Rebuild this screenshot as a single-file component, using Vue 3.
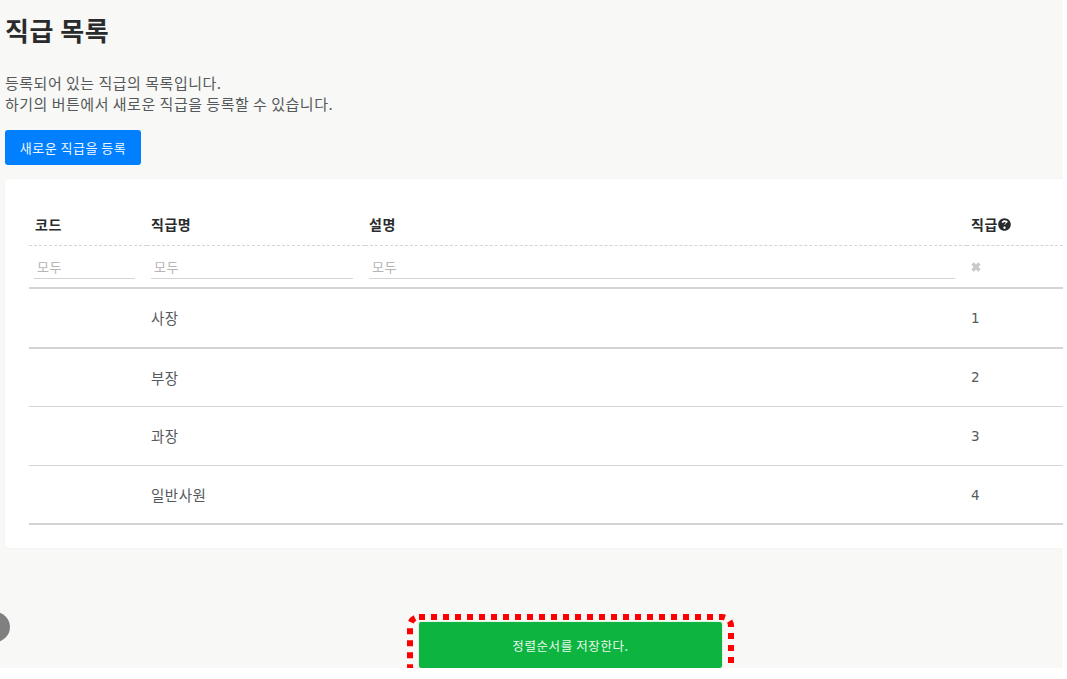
<script setup>
const rows = [
  { code: '', name: '사장', desc: '', rank: 1 },
  { code: '', name: '부장', desc: '', rank: 2 },
  { code: '', name: '과장', desc: '', rank: 3 },
  { code: '', name: '일반사원', desc: '', rank: 4 }
];
</script>

<template>
  <div class="page">
    <h1 class="title">직급 목록</h1>
    <p class="intro">등록되어 있는 직급의 목록입니다.<br />하기의 버튼에서 새로운 직급을 등록할 수 있습니다.</p>
    <button class="add-btn">새로운 직급을 등록</button>

    <div class="card">
      <table class="grid">
        <colgroup>
          <col class="col-code" />
          <col class="col-name" />
          <col class="col-desc" />
          <col class="col-rank" />
        </colgroup>
        <thead>
          <tr class="head-row">
            <th>코드</th>
            <th>직급명</th>
            <th>설명</th>
            <th>
              <span class="rank-head">직급<svg class="help" viewBox="0 0 512 512"><path fill="#292b2c" d="M504 256c0 137-111 248-248 248S8 393 8 256 119 8 256 8s248 111 248 248zM262.700 90c-54.500 0-89.300 23-116.500 63.800-3.500 5.300-2.400 12.400 2.700 16.300l34.700 26.300c5.200 3.900 12.600 3 16.700-2.100 17.900-22.700 30.100-35.800 57.300-35.800 20.400 0 45.700 13.100 45.700 33 0 15-12.400 22.700-32.600 34-23.600 13.200-54.800 29.700-54.800 70.900V240c0 6.600 5.400 12 12 12h56c6.600 0 12-5.400 12-12v-1.300c0-28.600 83.400-29.800 83.400-107.100C379.300 127.700 320.100 90 262.700 90zM256 338c-25.400 0-46 20.600-46 46 0 25.400 20.600 46 46 46s46-20.600 46-46c0-25.400-20.600-46-46-46z" /></svg></span>
            </th>
          </tr>
          <tr class="filter-row">
            <td><input class="filter" placeholder="모두" /></td>
            <td><input class="filter" placeholder="모두" /></td>
            <td><input class="filter" placeholder="모두" /></td>
            <td>
              <svg class="clear" viewBox="0 0 10 10"><path d="M1.500 1.500 8.500 8.500M8.500 1.500 1.500 8.500" stroke="#c8c8c8" stroke-width="3.200" fill="none" /></svg>
            </td>
          </tr>
        </thead>
        <tbody>
          <tr v-for="(row, index) in rows" :key="index" class="data-row">
            <td>{{ row.code }}</td>
            <td>{{ row.name }}</td>
            <td>{{ row.desc }}</td>
            <td class="rank">{{ row.rank }}</td>
          </tr>
        </tbody>
      </table>
    </div>

    <div class="handle"></div>
    <button class="save-btn">정렬순서를 저장한다.</button>
    <svg class="focus-ring" width="345" height="69" viewBox="0 0 345 69">
      <rect x="10" y="7" width="321" height="58" rx="9" fill="none" stroke="#f00" stroke-width="6" stroke-dasharray="6 6" />
    </svg>
  </div>
</template>

<style scoped>
.page {
  position: relative;
  width: 1063px;
  height: 668px;
  padding: 0 0 0 5px;
  box-sizing: border-box;
  background: #f8f8f6;
  font-family: "Noto Sans CJK KR", "Noto Sans", sans-serif;
  letter-spacing: 0.5px;
  color: #292b2c;
}

.title {
  margin: 0;
  padding-top: 12px;
  font-size: 26px;
  line-height: 36px;
  font-weight: 700;
}

.intro {
  margin: 24px 0 0;
  font-size: 15px;
  line-height: 21px;
  color: #55595c;
}

.add-btn {
  display: block;
  margin-top: 16px;
  width: 136px;
  height: 35px;
  padding: 0;
  border: 0;
  border-radius: 3px;
  background: #007fff;
  color: #f2f8ff;
  font: inherit;
  font-size: 13px;
  letter-spacing: 0.5px;
}

.card {
  margin-top: 14px;
  height: 369px;
  padding: 24px 0 0 24px;
  box-sizing: border-box;
  background: #fff;
  border-radius: 4px 0 0 4px;
  overflow: hidden;
  box-shadow: 0 0 2px rgba(0, 0, 0, 0.06);
}

.grid {
  width: 1034px;
  table-layout: fixed;
  border-collapse: collapse;
}

.col-code { width: 118px; }
.col-name { width: 218px; }
.col-desc { width: 602px; }

.head-row th {
  height: 42px;
  padding: 0 0 0 4px;
  text-align: left;
  font-size: 14px;
  font-weight: 700;
  border-bottom: 1px dashed #d4d4d4;
}

.head-row th:first-child { padding-left: 6px; }

.rank-head {
  display: inline-flex;
  align-items: center;
}

.help {
  width: 13px;
  height: 13px;
  margin-left: 0.500px;
}

.filter-row td {
  height: 41px;
  padding: 0 12px 0 4px;
  border-bottom: 2px solid #d4d4d4;
}

.filter-row td:first-child { padding-left: 5px; }
.filter-row td:last-child { padding-left: 4px; }

.filter {
  display: block;
  width: 100%;
  height: 24px;
  padding: 0 3px;
  box-sizing: border-box;
  border: 0;
  border-bottom: 1px solid #d4d4d4;
  background: transparent;
  font: inherit;
  font-size: 13px;
  letter-spacing: 0.5px;
  outline: none;
}

.filter::placeholder {
  color: #b5b5b5;
}

.clear {
  display: block;
  width: 10px;
  height: 10px;
  margin-top: 1px;
}

.data-row td {
  height: 57.600px;
  padding: 0 0 0 4px;
  font-size: 14.500px;
  color: #55595c;
  border-bottom: 1px solid #d4d4d4;
}

.data-row:first-child td,
.data-row:last-child td {
  border-bottom-width: 2px;
}

.rank {
  font-family: "DejaVu Sans", sans-serif;
  font-size: 13.500px !important;
  letter-spacing: 0;
}

.handle {
  position: absolute;
  left: -20px;
  top: 612px;
  width: 30px;
  height: 30px;
  border-radius: 50%;
  background: #808080;
}

.save-btn {
  position: absolute;
  left: 418px;
  top: 621px;
  width: 305px;
  height: 47px;
  padding: 0;
  border: 1px solid #e2f5e7;
  border-bottom: 0;
  border-radius: 3px;
  background: #0db540;
  color: #e9f8ed;
  font: inherit;
  font-size: 12.500px;
  letter-spacing: 0.600px;
}

.focus-ring {
  position: absolute;
  left: 400px;
  top: 610px;
  display: block;
}
</style>
